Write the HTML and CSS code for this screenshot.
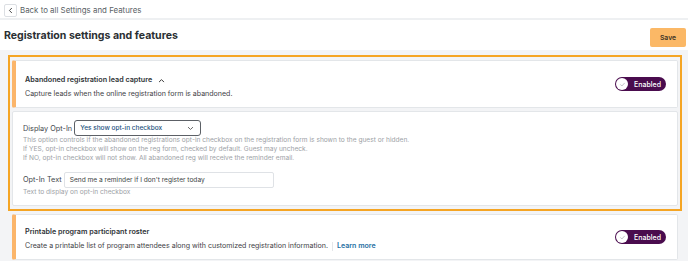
FILE: index.html
```html
<!DOCTYPE html>
<html>
<head>
<meta charset="utf-8">
<link rel="stylesheet" href="styles.css">
</head>
<body>
<div class="topbar">
  <span class="back-btn">
    <svg width="7" height="7" viewBox="0 0 8 8"><path d="M5.2 1.5 L2.8 4 L5.2 6.5" fill="none" stroke="#444" stroke-width="1.1" stroke-linecap="round" stroke-linejoin="round"/></svg>
  </span>
  <span class="back-text">Back to all Settings and Features</span>
</div>
<div class="title-row">
  <h1 class="page-title">Registration settings and features</h1>
  <button class="save-btn">Save</button>
</div>
<main class="main">
  <section class="highlight">
    <div class="card feature">
      <div class="feature-body">
        <div class="feature-title">Abandoned registration lead capture
          <svg class="caret" width="7" height="5" viewBox="0 0 8 5"><path d="M1.5 4 L4 1.5 L6.5 4" fill="none" stroke="#333" stroke-width="1.1" stroke-linecap="round" stroke-linejoin="round"/></svg>
        </div>
        <div class="feature-desc">Capture leads when the online registration form is abandoned.</div>
      </div>
      <div class="toggle"><span class="knob"><svg width="7" height="7" viewBox="0 0 8 8"><path d="M1.8 4.2 L3.3 5.7 L6.2 2.5" fill="none" stroke="#b9b9c0" stroke-width="1" stroke-linecap="round" stroke-linejoin="round"/></svg></span><span class="toggle-label">Enabled</span></div>
    </div>
    <div class="card settings">
      <div class="field-row">
        <label class="field-label">Display Opt-In</label>
        <div class="select">
          <span>Yes show opt-in checkbox</span>
          <svg width="7" height="5" viewBox="0 0 8 5"><path d="M1.5 1.2 L4 3.6 L6.5 1.2" fill="none" stroke="#555" stroke-width="1" stroke-linecap="round" stroke-linejoin="round"/></svg>
        </div>
      </div>
      <div class="help">
        <div>This option controls if the abandoned registrations opt-in checkbox on the registration form is shown to the guest or hidden.</div>
        <div>If YES, opt-in checkbox will show on the reg form, checked by default. Guest may uncheck.</div>
        <div>If NO, opt-in checkbox will not show. All abandoned reg will receive the reminder email.</div>
      </div>
      <div class="field-row second">
        <label class="field-label">Opt-In Text</label>
        <div class="input">Send me a reminder if I don't register today</div>
      </div>
      <div class="help">Text to display on opt-in checkbox</div>
    </div>
  </section>
  <div class="card feature roster">
    <div class="feature-body">
      <div class="feature-title">Printable program participant roster</div>
      <div class="feature-desc">Create a printable list of program attendees along with customized registration information.<span class="sep"></span><a class="learn">Learn more</a></div>
    </div>
    <div class="toggle"><span class="knob"><svg width="7" height="7" viewBox="0 0 8 8"><path d="M1.8 4.2 L3.3 5.7 L6.2 2.5" fill="none" stroke="#b9b9c0" stroke-width="1" stroke-linecap="round" stroke-linejoin="round"/></svg></span><span class="toggle-label">Enabled</span></div>
  </div>
</main>
</body>
</html>
```
FILE: styles.css
```css
* { box-sizing: border-box; }
html, body { margin: 0; padding: 0; }
body {
  font-family: "Inter", "Liberation Sans", sans-serif;
  color: #333;
  background: #f3f4f6;
  width: 688px;
  height: 261px;
  overflow: hidden;
}
.topbar {
  display: flex;
  align-items: center;
  gap: 3px;
  height: 20px;
  padding: 2px 4px 0;
  background: #fff;
  border-bottom: 2px solid #eef0f2;
}
.back-btn {
  width: 13px;
  height: 13px;
  border: 1px solid #dcdfe3;
  border-radius: 2px;
  display: flex;
  align-items: center;
  justify-content: center;
  background: #fff;
}
.back-text {
  font-size: 7.9px;
  color: #5a5f66;
}
.title-row {
  display: flex;
  align-items: center;
  justify-content: space-between;
  height: 30px;
  padding: 0 2px 0 4px;
  background: #fff;
}
.page-title {
  margin: 1px 0 0;
  font-size: 10.55px;
  font-weight: 700;
  color: #2b2f33;
}
.save-btn {
  width: 36px;
  height: 19px;
  margin-top: 4px;
  border: none;
  border-radius: 2px;
  background: #fbb866;
  color: #3a3326;
  font-family: inherit;
  font-size: 6.8px;
  font-weight: 600;
  padding: 0;
}
.main {
  padding: 5px 6px 0 8px;
  display: flex;
  flex-direction: column;
  gap: 3px;
}
.highlight {
  border: 2px solid #f5a524;
  padding: 3px 2px;
  display: flex;
  flex-direction: column;
  gap: 3px;
}
.card {
  background: #fff;
  border: 1px solid #e3e6e9;
  border-radius: 2px;
}
.feature {
  display: flex;
  align-items: center;
  justify-content: space-between;
  border-left: 4px solid #fbb56a;
  padding: 0 11px 0 9px;
}
.feature-body {
  padding: 14px 0 8px;
  display: flex;
  flex-direction: column;
  gap: 4px;
}
.roster { margin: 0 4px; }
.roster .feature-body { padding: 12px 0 8px; }
.feature-title {
  font-size: 7.2px;
  font-weight: 600;
  line-height: 10px;
  color: #2e3236;
  display: flex;
  align-items: center;
  gap: 6px;
}
.feature-desc {
  font-size: 7.05px;
  line-height: 10px;
  color: #3f4347;
  display: flex;
  align-items: center;
}
.sep {
  display: inline-block;
  width: 1px;
  height: 9px;
  background: #e4e6e9;
  margin: 0 4px 0 4px;
}
.learn {
  color: #1f6fa3;
  font-weight: 600;
}
.toggle {
  width: 51px;
  height: 14px;
  border-radius: 7px;
  background: #4a0c4e;
  display: flex;
  align-items: center;
  padding: 0 1px;
}
.knob {
  width: 12px;
  height: 12px;
  border-radius: 50%;
  background: #fff;
  display: flex;
  align-items: center;
  justify-content: center;
}
.toggle-label {
  flex: 1;
  text-align: center;
  color: #fff;
  font-size: 7px;
  font-weight: 500;
  padding-left: 2px;
}
.settings {
  padding: 8px 10px 9px;
  height: 95px;
}
.field-row {
  display: flex;
  align-items: center;
  gap: 2px;
}
.field-row.second { margin-top: 8px; }
.field-label {
  font-size: 7.3px;
  color: #42464b;
}
.select {
  width: 127px;
  height: 16px;
  border: 1px solid #5c6066;
  border-radius: 3px;
  display: flex;
  align-items: center;
  justify-content: space-between;
  padding: 0 6px 0 5px;
  font-size: 6.5px;
  font-weight: 500;
  color: #24527e;
}
.input {
  width: 210px;
  height: 16px;
  border: 1px solid #dfe2e6;
  border-radius: 2px;
  display: flex;
  align-items: center;
  padding: 0 5px;
  font-size: 6.6px;
  color: #3b3f44;
}
.help {
  font-size: 6.6px;
  line-height: 9.2px;
  color: #9da1a6;
}
```
